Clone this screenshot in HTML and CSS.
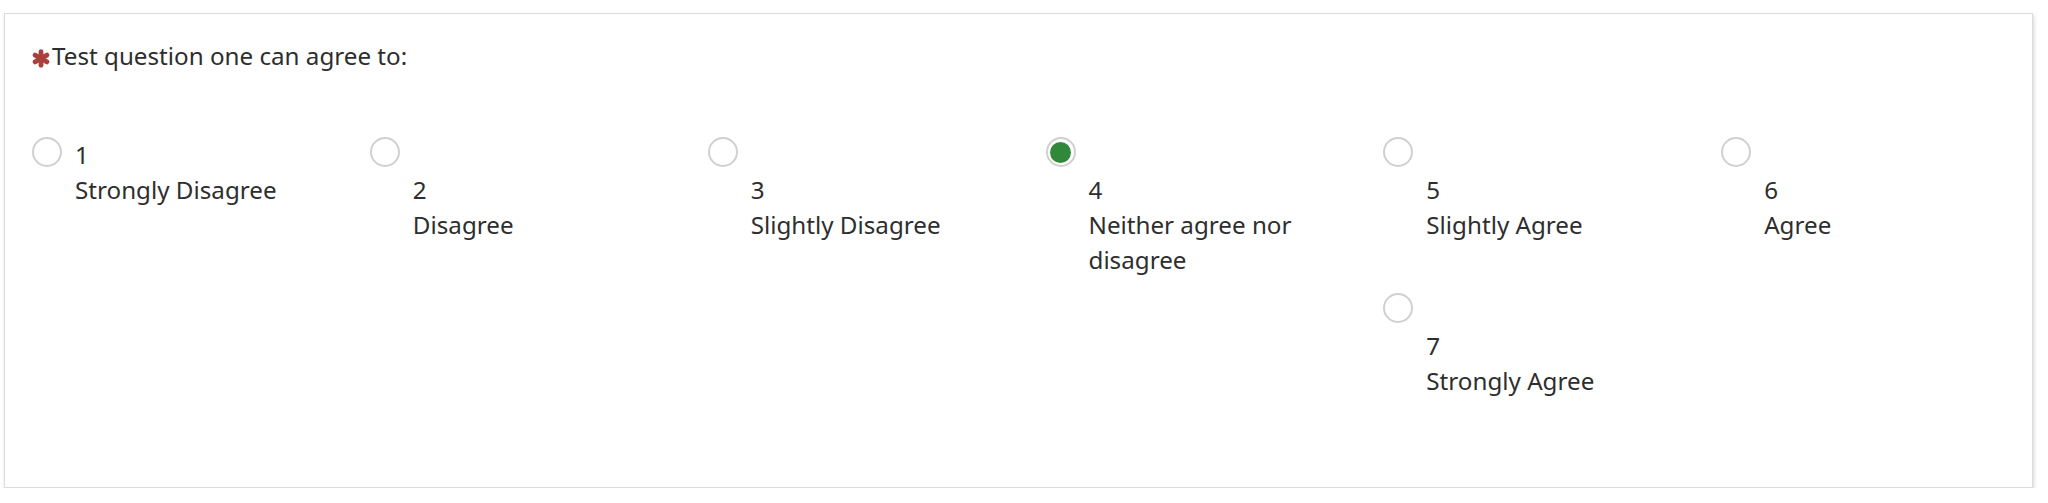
FILE: index.html
```html
<!DOCTYPE html>
<html lang="en">
<head>
<meta charset="utf-8">
<title>Question</title>
<link rel="stylesheet" href="styles.css">
</head>
<body>
<div class="page">
  <div class="card">
    <div class="question">
      <svg class="req" viewBox="0 0 18 18" aria-hidden="true">
        <g stroke="#a9403e" stroke-width="4.8" stroke-linecap="round">
          <line x1="9" y1="2.2" x2="9" y2="15.8"/>
          <line x1="3.1" y1="5.6" x2="14.9" y2="12.4"/>
          <line x1="3.1" y1="12.4" x2="14.9" y2="5.6"/>
        </g>
      </svg><span>Test question one can agree to:</span>
    </div>
    <div class="options">
      <label class="opt inline">
        <span class="radio"></span>
        <span class="text">1<br>Strongly Disagree</span>
      </label>
      <label class="opt">
        <span class="radio"></span>
        <span class="text">2<br>Disagree</span>
      </label>
      <label class="opt">
        <span class="radio"></span>
        <span class="text">3<br>Slightly Disagree</span>
      </label>
      <label class="opt">
        <span class="radio checked"></span>
        <span class="text">4<br>Neither agree nor<br>disagree</span>
      </label>
      <label class="opt">
        <span class="radio"></span>
        <span class="text">5<br>Slightly Agree</span>
      </label>
      <label class="opt">
        <span class="radio"></span>
        <span class="text">6<br>Agree</span>
      </label>
      <label class="opt opt-wrap">
        <span class="radio"></span>
        <span class="text">7<br>Strongly Agree</span>
      </label>
    </div>
  </div>
</div>
</body>
</html>
```
FILE: styles.css
```css
html, body {
  margin: 0;
  padding: 0;
  background: #fff;
}

.page {
  padding: 13px 15px 0 4px;
}

.card {
  border: 1px solid #dcdcdc;
  box-shadow: 1px 2px 4px rgba(0, 0, 0, 0.16);
  background: #fff;
  padding: 24px 0 89px 0;
  font-family: "Noto Sans", "Open Sans", sans-serif;
  font-size: 24.2px;
  line-height: 35px;
  color: #2e2e2e;
}

.question {
  padding-left: 27px;
  display: flex;
  align-items: center;
}

.req {
  width: 18px;
  height: 19px;
  margin-right: 2px;
  margin-top: 5px;
  flex: none;
}

.options {
  margin-top: 64px;
  display: grid;
  grid-template-columns: repeat(6, 1fr);
  row-gap: 16px;
  align-items: start;
}

.opt {
  display: flex;
  flex-direction: column;
  padding-left: 27px;
}

.opt.inline {
  flex-direction: row;
  gap: 13px;
}

.opt-wrap {
  grid-column: 5;
}

.radio {
  box-sizing: border-box;
  width: 30px;
  height: 30px;
  border: 2px solid #d0d0d0;
  border-radius: 50%;
  background: #fff;
  flex: none;
  display: flex;
  align-items: center;
  justify-content: center;
}

.opt .radio {
  margin-bottom: 5px;
}

.opt.inline .radio {
  margin-bottom: 0;
}

.radio.checked::after {
  content: "";
  width: 21px;
  height: 21px;
  border-radius: 50%;
  background: #31873a;
}

.text {
  margin-left: 43px;
}

.opt.inline .text {
  margin-left: 0;
}
```
